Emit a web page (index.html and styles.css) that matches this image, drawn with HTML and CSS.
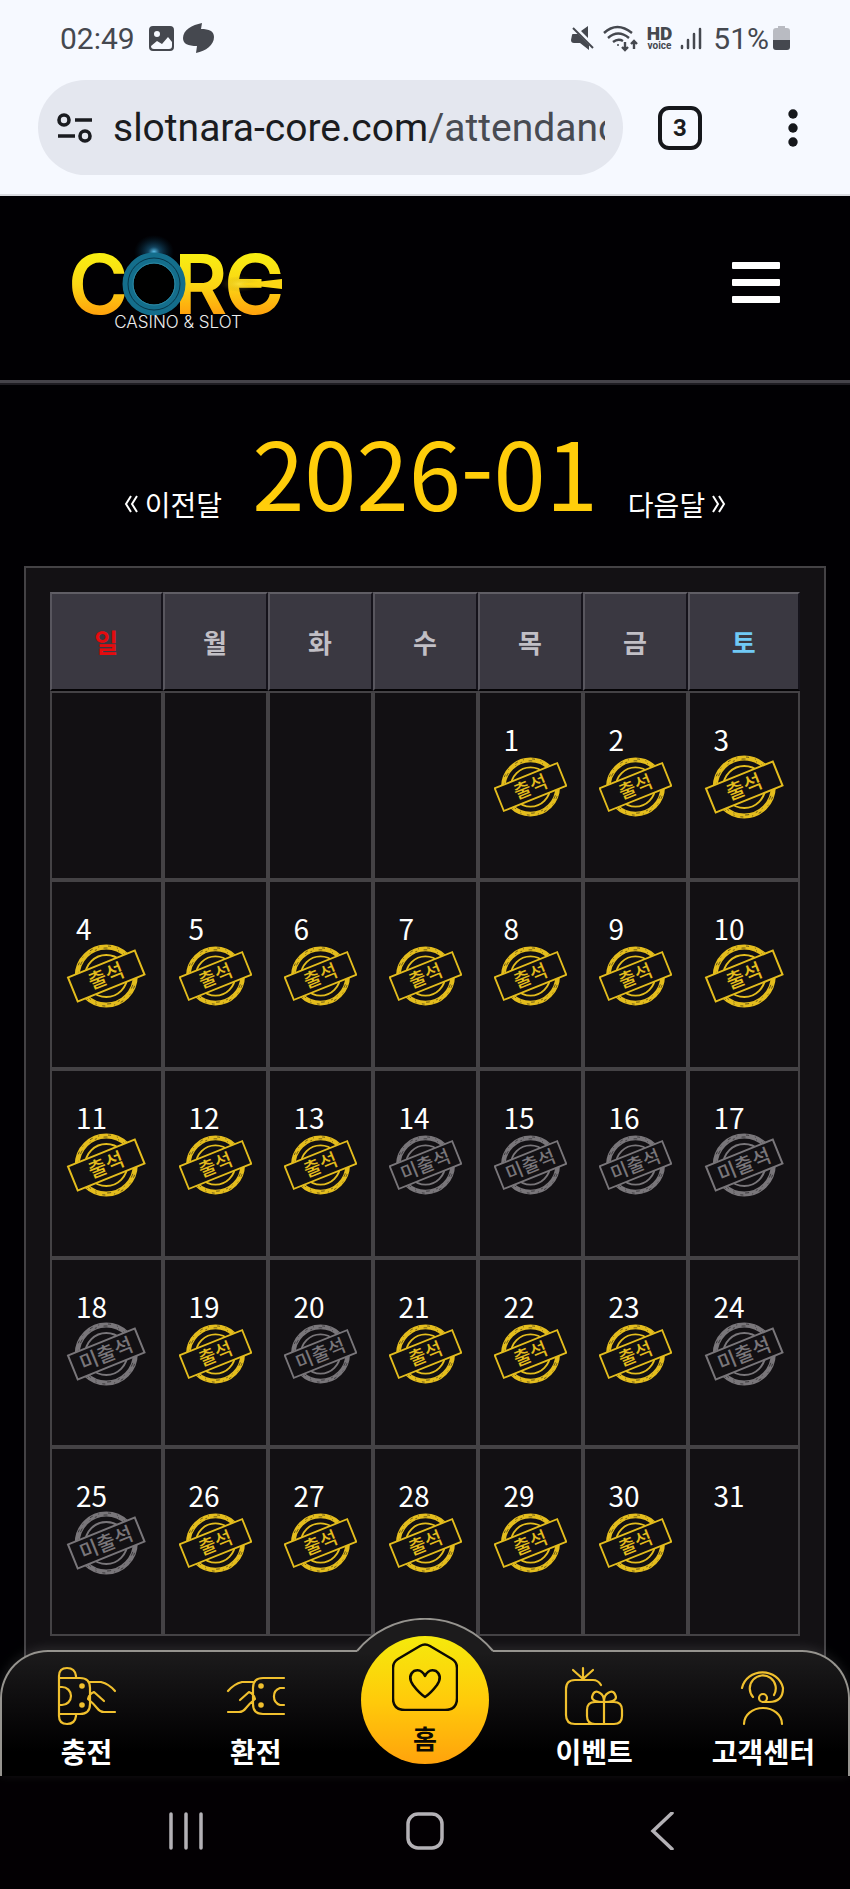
FILE: index.html
```html
<!DOCTYPE html>
<html lang="ko">
<head>
<meta charset="utf-8">
<meta name="viewport" content="width=device-width, initial-scale=1">
<title>CORE Casino &amp; Slot</title>
<link rel="stylesheet" href="styles.css">
</head>
<body>
<header class="browser">
  <div class="status">
    <span class="clock">02:49</span>
    <svg width="25" height="25" viewBox="0 0 25 25"><path fill="#45484f" fill-rule="evenodd" d="M4 0h17a4 4 0 0 1 4 4v17a4 4 0 0 1-4 4H4a4 4 0 0 1-4-4V4a4 4 0 0 1 4-4zM2 20q0 3 3 3h15q3 0 3-3v-4l-4-5-6 7-5-3-6 5zM8 5a3 3 0 1 0 0 6 3 3 0 0 0 0-6z"/></svg>
    <svg width="32" height="30" viewBox="0 0 32 30"><path fill="#45484f" d="M19 0C9 2 0 7 0 15c0 6 5 8 14 8l-1 7c10-2 18-8 18-16 0-6-5-8-13-8z"/></svg>
    <div class="status-right">
      <svg width="24" height="24" viewBox="0 0 24 24"><path fill="#45484f" d="M1 9q0-1 1-1h5l11 11v5L9 17H3q-3 0-3-3zM10 5l7-5v12z"/><path d="M2 2l20 20" stroke="#45484f" stroke-width="2"/></svg>
      <svg width="36" height="27" viewBox="0 0 36 27" fill="none" stroke="#45484f" stroke-width="2.400"><path d="M1 8Q14-4 29 8M5 13Q15 4 26 13M10 17Q15 13 20 16M22 17v8M19 22l3 3 3-3M31 24v-8M28 19l3-3 3 3"/><circle cx="15" cy="20" r="1" fill="#45484f" stroke="none"/></svg>
      <span class="hd"><b>HD</b><small>voice</small></span>
      <svg width="22" height="23" viewBox="0 0 22 23" stroke="#45484f" stroke-width="2.500" stroke-linecap="round"><path d="M2 19v2M8 13v8M14 7v14M20 2v19"/></svg>
      <span class="battery-text">51%</span>
      <svg width="17" height="24" viewBox="0 0 17 24"><path fill="#b9bbc2" d="M5 0h7v2h2q3 0 3 3v10H0V5q0-3 3-3h2z"/><path fill="#45484f" d="M0 14h17v7q0 3-3 3H3q-3 0-3-3z"/></svg>
    </div>
  </div>
  <div class="toolbar">
    <button class="address" type="button" aria-label="주소">
      <svg width="36" height="30" viewBox="0 0 36 30" fill="none" stroke="#1a1c20" stroke-width="3.600"><circle cx="7" cy="7" r="5"/><circle cx="28" cy="23" r="5"/><path d="M18 7h17M1 23h17"/></svg>
      <span class="url">slotnara-core.com<span class="path">/attendance</span></span>
    </button>
    <button class="tabs" type="button">3</button>
    <button class="more" type="button" aria-label="메뉴"><svg width="10" height="38" viewBox="0 0 10 38" fill="#15171b"><circle cx="5" cy="5" r="4.700"/><circle cx="5" cy="19" r="4.700"/><circle cx="5" cy="33" r="4.700"/></svg></button>
  </div>
</header>

<div class="site-header">
  <a href="#" class="logo" aria-label="CORE Casino &amp; Slot">
    <svg width="216" height="100" viewBox="-2 -4 216 100">
      <defs>
        <linearGradient id="gold" gradientUnits="userSpaceOnUse" x1="0" y1="18" x2="0" y2="80"><stop offset="0" stop-color="#f8ee12"/><stop offset=".5" stop-color="#fbd614"/><stop offset="1" stop-color="#ff9f0c"/></linearGradient>
        <radialGradient id="spark"><stop offset="0" stop-color="#5fc4ee"/><stop offset=".3" stop-color="#1c6c96" stop-opacity=".6"/><stop offset="1" stop-color="#06344f" stop-opacity="0"/></radialGradient>
        <radialGradient id="glow"><stop offset="0" stop-color="#fff36a"/><stop offset="1" stop-color="#8a6400" stop-opacity="0"/></radialGradient>
      </defs>
      <g class="wordmark" fill="url(#gold)"><text x="-4" y="78">C</text><text x="102" y="78">R</text><text x="152" y="78">Є</text></g>
      <ellipse cx="82" cy="16" rx="20" ry="17" fill="url(#spark)"/>
      <circle cx="82" cy="48" r="26" fill="#000" stroke="#146e8c" stroke-width="11"/>
      <circle cx="82" cy="48" r="26" fill="none" stroke="#06364a"/>
      <circle cx="82" cy="48" r="21" fill="none" stroke="#2c89a4"/>
      <ellipse cx="168" cy="48" rx="20" ry="8" fill="url(#glow)" opacity=".4"/>
      <path d="M167 48l43-5v10z" fill="#fbd614"/>
      <text class="tagline" x="106" y="92">CASINO &amp; SLOT</text>
    </svg>
  </a>
  <button class="burger" type="button" aria-label="전체 메뉴"><i></i><i></i><i></i></button>
</div>

<main>
  <div class="month">
    <a href="#"><svg width="15" height="18" viewBox="0 0 15 18"><path d="M7 1L2 9l5 8M13 1L8 9l5 8"/></svg>이전달</a>
    <h1>2026-01</h1>
    <a href="#">다음달<svg width="15" height="18" viewBox="0 0 15 18"><path d="M2 1l5 8-5 8M8 1l5 8-5 8"/></svg></a>
  </div>
  <div class="panel">
    <table class="calendar">
      <thead><tr><th class="sun">일</th><th>월</th><th>화</th><th>수</th><th>목</th><th>금</th><th class="sat">토</th></tr></thead>
      <tbody id="days"></tbody>
    </table>
  </div>
</main>

<nav class="dock">
  <svg class="arch" width="138" height="36" viewBox="0 0 138 36"><path d="M1 33A88 88 0 0 1 137 33V36H1z" fill="#1c1b1c"/><path d="M1 33A88 88 0 0 1 137 33" fill="none" stroke="#96948f" stroke-width="2"/></svg>
  <a href="#">
    <svg class="icon" viewBox="0 0 58 58"><path d="M1 9v40q0 8 8 8t9-8v-2M1 9q0-8 8-8t9 8v2M1 11h21q10 0 10 10v16q0 10-10 10H1M1 20h3a9 9 0 0 1 0 18H1M32 15h11q8 2 14 9M46 34L36 25q-5 2-6 7 5 4 9 9 3 4 7 4h11"/><circle class="dot" cx="24" cy="19" r="2.800"/><circle class="dot" cx="24" cy="38" r="2.800"/></svg>
    <span>충전</span>
  </a>
  <a href="#">
    <svg class="icon" viewBox="0 0 58 58"><path d="M57 11H36q-10 0-10 10v16q0 10 10 10h21M57 21h-4a9 9 0 0 0 0 17h4M26 15H15Q7 17 1 24M13 33l9-8q5 2 6 7-5 4-9 9-3 4-7 4H1"/><circle class="dot" cx="34" cy="19" r="2.800"/><circle class="dot" cx="34" cy="38" r="2.800"/></svg>
    <span>환전</span>
  </a>
  <a href="#" class="home">
    <svg width="66" height="68" viewBox="0 0 66 68" fill="none" stroke="#0c0a04" stroke-width="2.500"><path d="M28 3q5-3 10 0l22 13q5 3 5 9v30q0 12-12 12H13Q1 67 1 55V25q0-6 5-9z"/><path d="M33 54q-6-4-12-12-6-9 1-14 7-3 11 5 4-8 11-5 7 5 1 14-6 8-12 12z" stroke-linejoin="round"/></svg>
    <span>홈</span>
  </a>
  <a href="#">
    <svg class="icon" viewBox="0 0 58 58"><path d="M18 12V1M8 3l10 9L28 3M36 18q-3-5-8-5H10q-9 0-9 9v26q0 9 9 9h38M30 35h19q8 0 8 8v6q0 8-8 8H30q-8 0-8-8v-6q0-8 8-8zM39 57V31M39 35q-12 0-12-5 2-8 8-4 4 2 4 9zq12 0 12-5-2-8-8-4-4 2-4 9z"/></svg>
    <span>이벤트</span>
  </a>
  <a href="#">
    <svg class="icon" viewBox="0 0 58 58"><path d="M8 21a21 20 0 0 1 41 0q0 14-14 14h-6M19 30a13 13 0 1 1 21-2M10 57a19 16 0 0 1 38 0"/><circle cx="29" cy="31" r="4"/></svg>
    <span>고객센터</span>
  </a>
</nav>

<footer class="system">
  <button type="button" aria-label="최근 앱"><svg width="38" height="38" viewBox="0 0 38 38"><path d="M4 2v34M19 2v34M34 2v34"/></svg></button>
  <button type="button" aria-label="홈"><svg width="38" height="38" viewBox="0 0 38 38"><rect x="2" y="2" width="34" height="34" rx="10"/></svg></button>
  <button type="button" aria-label="뒤로"><svg width="38" height="38" viewBox="0 0 38 38"><path d="M27 1L8 19l19 18"/></svg></button>
</footer>
<script src="calendar.js"></script>
</body>
</html>
```
FILE: styles.css
```css
* { box-sizing: border-box; }
body {
  margin: 0;
  background: #010003;
  color: #fff;
  font-family: "Noto Sans CJK KR", sans-serif;
  font-size: 28px;
}
a { color: inherit; text-decoration: none; }
button { margin: 0; padding: 0; border: 0; background: none; color: inherit; cursor: pointer; }
svg { display: block; flex: none; }

.browser { background: #f6f9ff; border-bottom: 2px solid #d9dbe0; padding-bottom: 19px; font-family: Roboto, sans-serif; }
.status { display: flex; align-items: center; height: 80px; padding: 0 60px 4px; color: #45484f; }
.clock, .battery-text { font-size: 30px; }
.clock { margin-right: 14px; }
.status > svg + svg { margin-left: 9px; }
.status-right { display: flex; align-items: center; gap: 8px; margin-left: auto; }
.status-right .battery-text { margin: 0 -4px 0 3px; }
.hd { display: flex; flex-direction: column; align-items: center; }
.hd b { font-size: 19px; font-weight: 900; line-height: 15px; }
.hd small { font-size: 10px; font-weight: 700; line-height: 10px; }
.toolbar { display: flex; align-items: center; padding: 0 52px 0 38px; color: #1a1c20; }
.address { display: flex; align-items: center; gap: 20px; flex: 1; min-width: 0; height: 95px; padding: 0 18px 0 19px; border-radius: 48px; background: #e4e7ef; font: 39px/50px Roboto, sans-serif; text-align: left; }
.url { flex: 1; overflow: hidden; white-space: nowrap; }
.path { color: #484b52; }
.tabs { width: 44px; height: 44px; margin: 0 86px 0 35px; border: 4px solid #15171b; border-radius: 11px; font: 700 24px/34px Roboto, sans-serif; }

.site-header { display: flex; align-items: center; justify-content: space-between; height: 187px; padding: 0 70px 12px; border-bottom: 3px solid #45434a; box-shadow: 0 2px 0 #1e1c22; }
.wordmark { font: 600 82px Inter, sans-serif; }
.tagline { font: 300 17px Inter, sans-serif; fill: #eee; text-anchor: middle; }
.burger { display: grid; gap: 10px; width: 48px; }
.burger i { height: 7px; background: #fff; border-radius: 1px; }

.month { display: flex; justify-content: center; align-items: flex-end; gap: 30px; padding: 27px 24px 36px; }
.month h1 { margin: 0; color: #ffcd0a; font-size: 94px; font-weight: 400; line-height: 120px; font-variant-ligatures: no-contextual; }
.month a { display: flex; align-items: center; gap: 6px; padding-bottom: 6px; line-height: 40px; }
.month path { fill: none; stroke: #fff; stroke-width: 2; }

.panel { margin: 0 24px; padding: 24px; background: #131114; border: 2px solid #444245; }
.calendar { width: 100%; border-collapse: separate; border-spacing: 0; table-layout: fixed; }
.calendar th { width: 14%; height: 99px; padding: 0; background: #3a3841; border: 2px solid; border-color: #605e65 #15131b #040305 #58565e; color: #c1bfc5; font-size: 26px; font-weight: 700; }
.calendar .sun, .calendar .sat { width: 15%; }
.calendar .sun { color: #e50b0e; }
.calendar .sat { color: #70c9f5; }
.calendar td { height: 189px; padding: 30px 14px 0; border: 2px solid #444245; background: #121013; vertical-align: top; line-height: 32px; }
.calendar time { display: block; padding-left: 10px; }
.stamp { width: 100%; height: 64px; color: #e4bd1d; }
.stamp.missed { color: #79767a; }
.stamp circle { fill: none; stroke: currentColor; }
.stamp .wear { stroke: #121013; }
.stamp rect { fill: #121013; stroke: currentColor; stroke-width: 2; }
.stamp text { fill: currentColor; font-size: 20px; font-weight: 500; text-anchor: middle; }

.dock { position: relative; z-index: 1; display: grid; grid-template-columns: repeat(5, 1fr); margin-top: -12px; padding: 15px 0 5px; border: 2px solid #96948f; border-bottom: 0; border-radius: 48px 48px 0 0; background: linear-gradient(#1c1b1c, #0a090a 50%, #000 80%); box-shadow: 0 -2px 12px rgba(255, 255, 255, .1); font-size: 28px; font-weight: 700; line-height: 40px; }
.dock a { display: flex; flex-direction: column; align-items: center; gap: 6px; }
.icon { width: 58px; height: 58px; overflow: visible; fill: none; stroke: #f0c02e; stroke-width: 2.200; stroke-linecap: round; stroke-linejoin: round; }
.icon .dot { fill: #f0c02e; stroke: none; }
.arch { position: absolute; top: -34px; left: 50%; transform: translateX(-50%); }
.dock .home { position: relative; justify-self: center; width: 128px; height: 128px; margin: -31px 0 -18px; padding-top: 7px; gap: 7px; border-radius: 50%; background: linear-gradient(#f5ea0c, #ffcb0a 50%, #ffa30c); color: #0c0a04; font-size: 26px; }

.system { display: grid; grid-template-columns: repeat(3, 1fr); place-items: center; height: 114px; padding: 0 66px 4px; background: #030003; }
.system svg { fill: none; stroke: #b4b1b6; stroke-width: 3.500; stroke-linecap: round; }
```
FILE: calendar.js
```js
// Attendance per day of the month: o = attended, x = missed, - = not yet.
const record = "ooooooooooooo" + "xxxxx" + "oxoooxx" + "ooooo" + "-";
const firstWeekday = 4;

function stamp(kind) {
  const missed = kind === "x";
  return `<svg class="stamp${missed ? " missed" : ""}" viewBox="0 0 78 64">
    <circle cx="39" cy="32" r="29" stroke-width="5"/>
    <circle class="wear" cx="39" cy="32" r="28" stroke-width=".6" stroke-dasharray="2 7 4 11 1 5"/>
    <circle class="wear" cx="39" cy="32" r="30" stroke-width=".6" stroke-dasharray="1 9 3 6"/>
    <circle cx="39" cy="32" r="21" stroke-width="2"/>
    <g transform="rotate(-22 39 32)"><rect x="3" y="19" width="72" height="26"/>
    <text x="39" y="39">${missed ? "미출석" : "출석"}</text></g></svg>`;
}

let html = "";
for (let cell = 0; cell < 35; cell++) {
  const day = cell - firstWeekday + 1;
  if (cell % 7 === 0) html += "<tr>";
  const mark = record[day - 1];
  html += day < 1 ? "<td></td>" : `<td><time>${day}</time>${mark === "-" ? "" : stamp(mark)}</td>`;
  if (cell % 7 === 6) html += "</tr>";
}
document.getElementById("days").innerHTML = html;
```
